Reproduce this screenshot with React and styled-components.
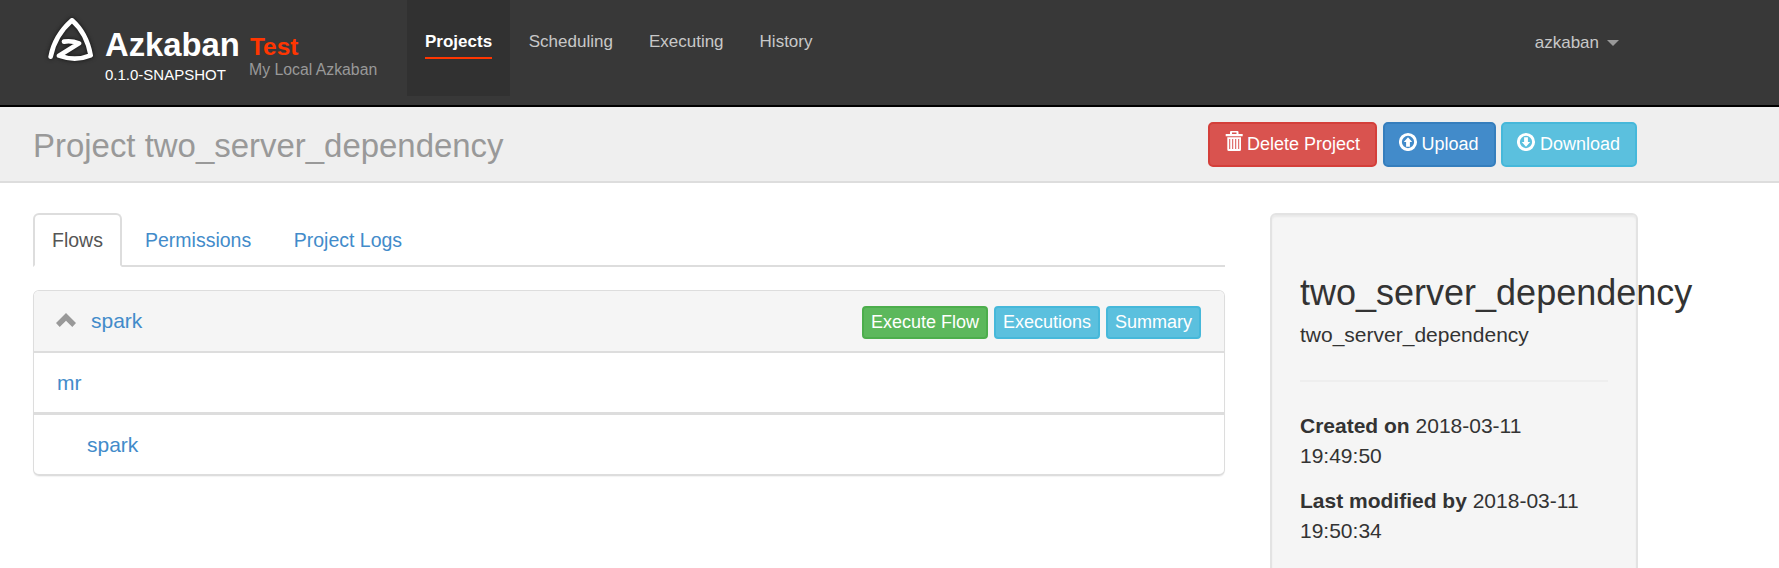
import React from 'react';
import styled, { createGlobalStyle } from 'styled-components';

const GlobalStyle = createGlobalStyle`
  *, *::before, *::after { box-sizing: border-box; }
  body {
    margin: 0;
    background: #fff;
    color: #333;
    font: 21px/30px "Liberation Sans", Arial, sans-serif;
    overflow: hidden;
  }
  h1, h3, p, ul { margin: 0; padding: 0; font-weight: 400; }
  a { text-decoration: none; }
`;

const Page = styled.div`
  width: 1779px;
  height: 568px;
  overflow: hidden;
`;

const Navbar = styled.header`
  display: flex;
  height: 107px;
  padding: 0 160px 0 45px;
  background: #383838;
  border-bottom: 2px solid #000;
`;

const Logo = styled.svg`
  flex: none;
  width: 50px;
  height: 50px;
  margin: 14px 10px 0 0;
  filter: drop-shadow(0 0 2px #111);
`;

const Brand = styled.div`
  width: 144px;
  padding-top: 26px;
`;

const BrandName = styled.div`
  color: #fff;
  font-size: 32.8px;
  font-weight: 700;
  line-height: 38px;
  white-space: nowrap;
`;

const Version = styled.div`
  padding-top: 2px;
  color: #fff;
  font-size: 15px;
  line-height: 18px;
  white-space: nowrap;
`;

const Instance = styled.div`
  width: 158px;
  padding-top: 33px;
`;

const InstanceName = styled.div`
  padding-left: 1px;
  color: #ff3601;
  font-size: 24.4px;
  font-weight: 700;
  line-height: 28px;
`;

const InstanceLabel = styled.div`
  color: #999;
  font-size: 15.8px;
  line-height: 18px;
  white-space: nowrap;
`;

const Nav = styled.nav`
  display: flex;
  height: 96px;
`;

const NavItem = styled.a`
  height: 96px;
  padding: 32px 18px 0;
  background: ${(p) => (p.$active ? '#313131' : 'transparent')};
  color: ${(p) => (p.$active ? '#fff' : '#c8c8c8')};
  font-size: 17px;
  font-weight: ${(p) => (p.$active ? 700 : 400)};
  line-height: 19px;
  &:nth-child(2) { margin-left: 0.7px; }
`;

const NavLabel = styled.span`
  display: block;
  height: 27px;
  border-bottom: 2px solid ${(p) => (p.$active ? '#ff3601' : 'transparent')};
`;

const UserMenu = styled.a`
  display: flex;
  align-items: center;
  gap: 8px;
  height: 19px;
  margin: 33px 0 0 auto;
  color: #c8c8c8;
  font-size: 17px;
`;

const Caret = styled.span`
  border: 6px solid transparent;
  border-top-color: #999;
  border-bottom: 0;
`;

const TitleBar = styled.div`
  display: flex;
  justify-content: space-between;
  height: 76px;
  padding: 15px 142px 0 33px;
  background: #efefef;
  border-bottom: 2px solid #ddd;
`;

const Title = styled.h1`
  padding-top: 4px;
  color: #999;
  font-size: 32.95px;
  line-height: 40px;
`;

const ButtonGroup = styled.div`
  display: flex;
  gap: ${(p) => p.$gap};
`;

const tones = {
  danger: ['#d9534f', '#d43f3a'],
  primary: ['#428bca', '#357ebd'],
  info: ['#5bc0de', '#46b8da'],
  success: ['#5cb85c', '#4cae4c'],
};

const Button = styled.button`
  display: flex;
  align-items: flex-start;
  width: ${(p) => p.$width};
  padding: 0 0 0 ${(p) => (p.$small ? '7px' : '14px')};
  height: ${(p) => (p.$small ? '33px' : '45px')};
  background: ${(p) => tones[p.$tone][0]};
  border: 2px solid ${(p) => tones[p.$tone][1]};
  border-radius: ${(p) => (p.$small ? '4px' : '5px')};
  color: #fff;
  font: 18px/${(p) => (p.$small ? '28px' : '41px')} "Liberation Sans", Arial, sans-serif;
  white-space: nowrap;
`;

const ButtonIcon = styled.svg`
  flex: none;
  width: 20px;
  height: 20px;
  margin: 7px 3px 0 0;
`;

const Content = styled.main`
  display: flex;
  align-items: flex-start;
  padding: 30px 141px 0 33px;
`;

const MainColumn = styled.section`
  width: 1192px;
  margin-right: 45px;
`;

const Tabs = styled.ul`
  display: flex;
  height: 54px;
  border-bottom: 2px solid #ddd;
  list-style: none;
`;

const Tab = styled.li`
  height: 54px;
  margin-right: 3px;
  padding: 10px 17px 0;
  border: 2px solid ${(p) => (p.$active ? '#ddd' : 'transparent')};
  border-bottom-color: ${(p) => (p.$active ? '#fff' : 'transparent')};
  border-radius: 6px 6px 0 0;
  background: ${(p) => (p.$active ? '#fff' : 'transparent')};
  color: ${(p) => (p.$active ? '#555' : '#428bca')};
  font-size: 19.5px;
  & + & { padding: 10px 17.5px 0 18px; }
  &:first-child { width: 89px; padding-right: 0; }
`;

const Panel = styled.div`
  height: 186px;
  margin-top: 23px;
  border: 1px solid #ddd;
  border-bottom-width: 2px;
  border-radius: 6px;
  box-shadow: 0 1px 1px rgba(0, 0, 0, 0.05);
  overflow: hidden;
`;

const PanelHeader = styled.div`
  display: flex;
  align-items: flex-start;
  height: 62px;
  padding: 15px 23px 0 22px;
  background: #f5f5f5;
  border-bottom: 2px solid #ddd;
`;

const Chevron = styled.svg`
  width: 20px;
  height: 14px;
  margin: 7px 15px 0 0;
`;

const FlowLink = styled.a`
  flex: 1;
  color: #428bca;
`;

const JobRow = styled.div`
  height: ${(p) => (p.$last ? '59px' : '62px')};
  padding: 15px 0 0 ${(p) => p.$indent};
  border-bottom: ${(p) => (p.$last ? '0' : '3px')} solid #ddd;
`;

const Well = styled.aside`
  width: 368px;
  height: 480px;
  padding: 58px 28px 0 28px;
  background: #f5f5f5;
  border: 2px solid #e3e3e3;
  border-radius: 6px;
  box-shadow: inset 0 2px 2px rgba(0, 0, 0, 0.05);
`;

const WellTitle = styled.h3`
  margin-bottom: 7px;
  font-size: 36px;
  line-height: 40px;
  white-space: nowrap;
`;

const Rule = styled.div`
  height: 2px;
  margin: 30px 0 29px;
  background: #eee;
`;

const Detail = styled.p`
  margin-bottom: 15px;
`;

const TrashIcon = () => (
  <ButtonIcon viewBox="0 0 20 20" fill="#fff">
    <path d="M6 3V1q0-1 1-1h6.5q1 0 1 1v2h4.2v2.2H1.7V3zM8 1.6V3h4.5V1.6zM3.3 6.2H17v12.3q0 1.5-1.5 1.5H4.8q-1.5 0-1.5-1.5zM5.2 8v10h1V8zm3 0v10h1V8zm3 0v10h1V8zm3 0v10h1V8z" fillRule="evenodd" />
  </ButtonIcon>
);

const ArrowIcon = ({ down }) => (
  <ButtonIcon viewBox="0 0 20 20">
    <circle cx="9" cy="11" r="7.6" fill="none" stroke="#fff" strokeWidth="2.9" />
    <path d="M9 6.2 13.2 11H10.9v4.8H7.1V11H4.8z" fill="#fff" transform={down ? 'rotate(180 9 11)' : undefined} />
  </ButtonIcon>
);

export default function App() {
  return (
    <Page>
      <GlobalStyle />
      <Navbar>
        <Logo viewBox="15 12 150 150" fill="none" stroke="#fff" strokeWidth="14" strokeLinecap="round" strokeLinejoin="round">
          <path d="M32 140Q44 77 96 31Q140 70 152 136Q106 155 57 137L117 100Q94 91 72 95" />
        </Logo>
        <Brand>
          <BrandName>Azkaban</BrandName>
          <Version>0.1.0-SNAPSHOT</Version>
        </Brand>
        <Instance>
          <InstanceName>Test</InstanceName>
          <InstanceLabel>My Local Azkaban</InstanceLabel>
        </Instance>
        <Nav>
          {['Projects', 'Scheduling', 'Executing', 'History'].map((name, i) => (
            <NavItem key={name} $active={i === 0}>
              <NavLabel $active={i === 0}>{name}</NavLabel>
            </NavItem>
          ))}
        </Nav>
        <UserMenu>azkaban<Caret /></UserMenu>
      </Navbar>

      <TitleBar>
        <Title>Project two_server_dependency</Title>
        <ButtonGroup $gap="5.5px">
          <Button $tone="danger" $width="169px"><TrashIcon />Delete Project</Button>
          <Button $tone="primary" $width="113px"><ArrowIcon />Upload</Button>
          <Button $tone="info" $width="136px"><ArrowIcon down />Download</Button>
        </ButtonGroup>
      </TitleBar>

      <Content>
        <MainColumn>
          <Tabs>
            <Tab $active>Flows</Tab>
            <Tab>Permissions</Tab>
            <Tab>Project Logs</Tab>
          </Tabs>
          <Panel>
            <PanelHeader>
              <Chevron viewBox="0 0 20 14"><path d="M10 0 20 10l-3.7 4L10 7.8 3.7 14 0 10z" fill="#999" /></Chevron>
              <FlowLink>spark</FlowLink>
              <ButtonGroup $gap="6px">
                <Button $small $tone="success" $width="126px">Execute Flow</Button>
                <Button $small $tone="info" $width="106px">Executions</Button>
                <Button $small $tone="info" $width="95px">Summary</Button>
              </ButtonGroup>
            </PanelHeader>
            <JobRow $indent="23px"><FlowLink>mr</FlowLink></JobRow>
            <JobRow $indent="53px" $last><FlowLink>spark</FlowLink></JobRow>
          </Panel>
        </MainColumn>
        <Well>
          <WellTitle>two_server_dependency</WellTitle>
          <p>two_server_dependency</p>
          <Rule />
          <Detail><b>Created on</b> 2018-03-11 19:49:50</Detail>
          <Detail><b>Last modified by</b> 2018-03-11 19:50:34</Detail>
        </Well>
      </Content>
    </Page>
  );
}
